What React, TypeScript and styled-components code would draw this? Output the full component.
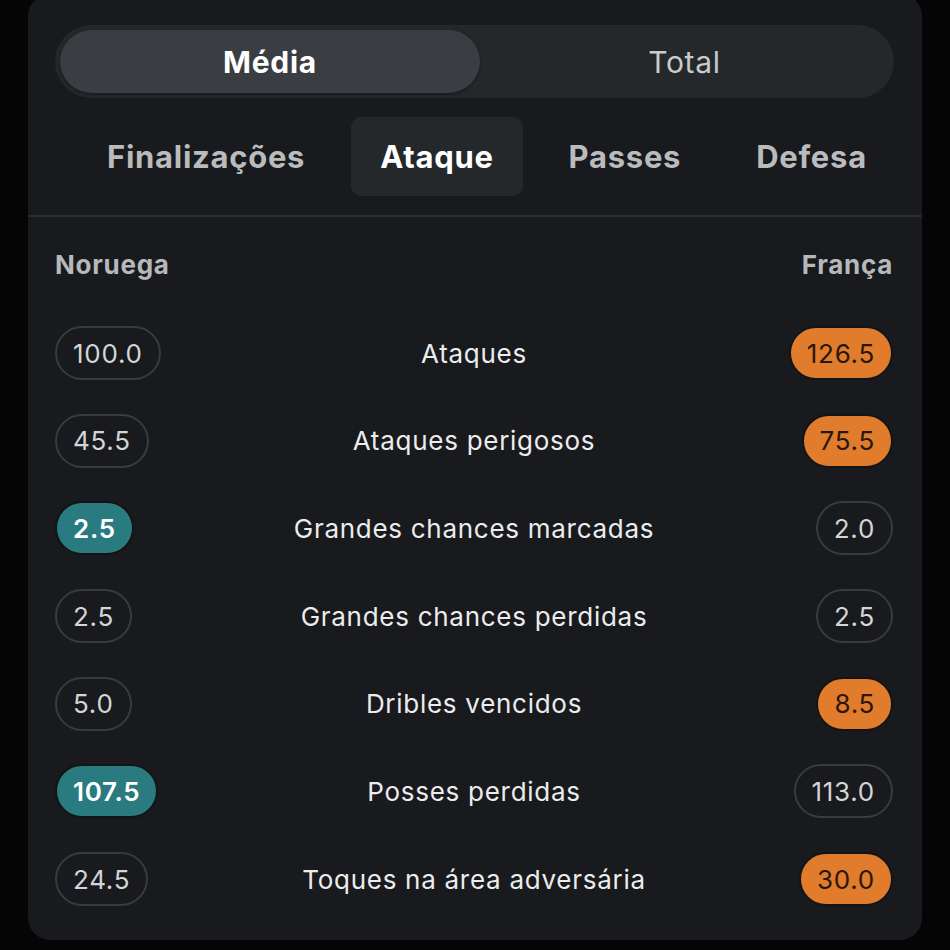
import React, { useState } from "react";
import styled, { createGlobalStyle } from "styled-components";

const GlobalStyle = createGlobalStyle`
    html, body {
        margin: 0;
        padding: 0;
        background: #050505;
        font-family: 'Inter', 'Roboto', sans-serif;
        letter-spacing: 0.045em;
        overflow: hidden;
    }
`;

const StyledPage = styled.div`
    width: 950px;
    height: 950px;
    display: flex;
    justify-content: center;
`;

const StyledCard = styled.div`
    width: 894px;
    height: 946px;
    margin-top: -6px;
    background: #181a1d;
    border-radius: 22px;
    display: flex;
    flex-direction: column;
`;

const StyledTopWrap = styled.div`
    padding: 31px 28px 19px 27px;
    display: flex;
    flex-direction: column;
    gap: 19px;
`;

const StyledSegment = styled.div`
    display: grid;
    grid-template-columns: 420px 1fr;
    height: 73px;
    padding: 5px;
    box-sizing: border-box;
    background: #25282b;
    border-radius: 37px;
`;

const StyledSegmentItem = styled.div<{ $active?: boolean }>`
    display: flex;
    align-items: center;
    justify-content: center;
    border-radius: 32px;
    font-size: 30px;
    font-weight: ${(p) => (p.$active ? 700 : 400)};
    color: ${(p) => (p.$active ? "#ffffff" : "#c9cacb")};
    background: ${(p) => (p.$active ? "#3a3d41" : "transparent")};
    box-shadow: ${(p) => (p.$active ? "0 1px 3px rgba(0,0,0,0.5)" : "none")};
    cursor: pointer;
    user-select: none;
`;

const StyledTabs = styled.div`
    display: flex;
    align-items: center;
    gap: 17px;
    height: 79px;
    padding-left: 23px;
`;

const StyledTab = styled.div<{ $active?: boolean }>`
    height: 79px;
    padding: 0 29px;
    display: flex;
    align-items: center;
    border-radius: 10px;
    font-size: 31px;
    font-weight: 700;
    color: ${(p) => (p.$active ? "#ffffff" : "#b9bbbd")};
    background: ${(p) => (p.$active ? "#25282b" : "transparent")};
    cursor: pointer;
    user-select: none;
`;

const StyledDivider = styled.div`
    height: 2px;
    background: #2a2d30;
`;

const StyledBody = styled.div`
    padding: 31px 29px 0 27px;
    display: flex;
    flex-direction: column;
`;

const StyledTeamsBar = styled.div`
    display: flex;
    justify-content: space-between;
    align-items: center;
    height: 32px;
    font-size: 26px;
    font-weight: 700;
    color: #b6b9bb;
    margin-bottom: 46px;
`;

const StyledRows = styled.div`
    display: flex;
    flex-direction: column;
    gap: 33.7px;
`;

const StyledRow = styled.div`
    display: grid;
    grid-template-columns: 1fr auto 1fr;
    align-items: center;
    height: 54px;
`;

const StyledLabel = styled.div`
    font-size: 26px;
    color: #ececec;
    text-align: center;
    white-space: nowrap;
`;

type Tone = "plain" | "home" | "away";

const toneBg: Record<Tone, string> = {
    plain: "transparent",
    home: "#2a7b80",
    away: "#e07c2b",
};

const toneColor: Record<Tone, string> = {
    plain: "#d3d5d6",
    home: "#ffffff",
    away: "#2a170a",
};

const StyledPill = styled.div<{ $tone: Tone; $right?: boolean }>`
    justify-self: ${(p) => (p.$right ? "end" : "start")};
    height: 54px;
    box-sizing: border-box;
    padding: 0 16px;
    display: flex;
    align-items: center;
    border-radius: 27px;
    border: 2px solid ${(p) => (p.$tone === "plain" ? "#383b3f" : "#131416")};
    background: ${(p) => toneBg[p.$tone]};
    color: ${(p) => toneColor[p.$tone]};
    font-size: 26px;
    font-weight: ${(p) => (p.$tone === "home" ? 600 : 400)};
`;

const stats = [
    { label: "Ataques", home: "100.0", away: "126.5", win: "away" },
    { label: "Ataques perigosos", home: "45.5", away: "75.5", win: "away" },
    { label: "Grandes chances marcadas", home: "2.5", away: "2.0", win: "home" },
    { label: "Grandes chances perdidas", home: "2.5", away: "2.5", win: "none" },
    { label: "Dribles vencidos", home: "5.0", away: "8.5", win: "away" },
    { label: "Posses perdidas", home: "107.5", away: "113.0", win: "home" },
    { label: "Toques na área adversária", home: "24.5", away: "30.0", win: "away" },
];

const tabs = ["Finalizações", "Ataque", "Passes", "Defesa"];

const App = () => {
    const [mode, setMode] = useState("media");
    const [tab, setTab] = useState("Ataque");

    return (
        <StyledPage>
            <GlobalStyle />
            <StyledCard>
                <StyledTopWrap>
                    <StyledSegment>
                        <StyledSegmentItem $active={mode === "media"} onClick={() => setMode("media")}>Média</StyledSegmentItem>
                        <StyledSegmentItem $active={mode === "total"} onClick={() => setMode("total")}>Total</StyledSegmentItem>
                    </StyledSegment>
                    <StyledTabs>
                        {tabs.map((t) => (
                            <StyledTab key={t} $active={tab === t} onClick={() => setTab(t)}>{t}</StyledTab>
                        ))}
                    </StyledTabs>
                </StyledTopWrap>
                <StyledDivider />
                <StyledBody>
                    <StyledTeamsBar>
                        <span>Noruega</span>
                        <span>França</span>
                    </StyledTeamsBar>
                    <StyledRows>
                        {stats.map((s) => (
                            <StyledRow key={s.label}>
                                <StyledPill $tone={s.win === "home" ? "home" : "plain"}>{s.home}</StyledPill>
                                <StyledLabel>{s.label}</StyledLabel>
                                <StyledPill $right $tone={s.win === "away" ? "away" : "plain"}>{s.away}</StyledPill>
                            </StyledRow>
                        ))}
                    </StyledRows>
                </StyledBody>
            </StyledCard>
        </StyledPage>
    );
};

export default App;
